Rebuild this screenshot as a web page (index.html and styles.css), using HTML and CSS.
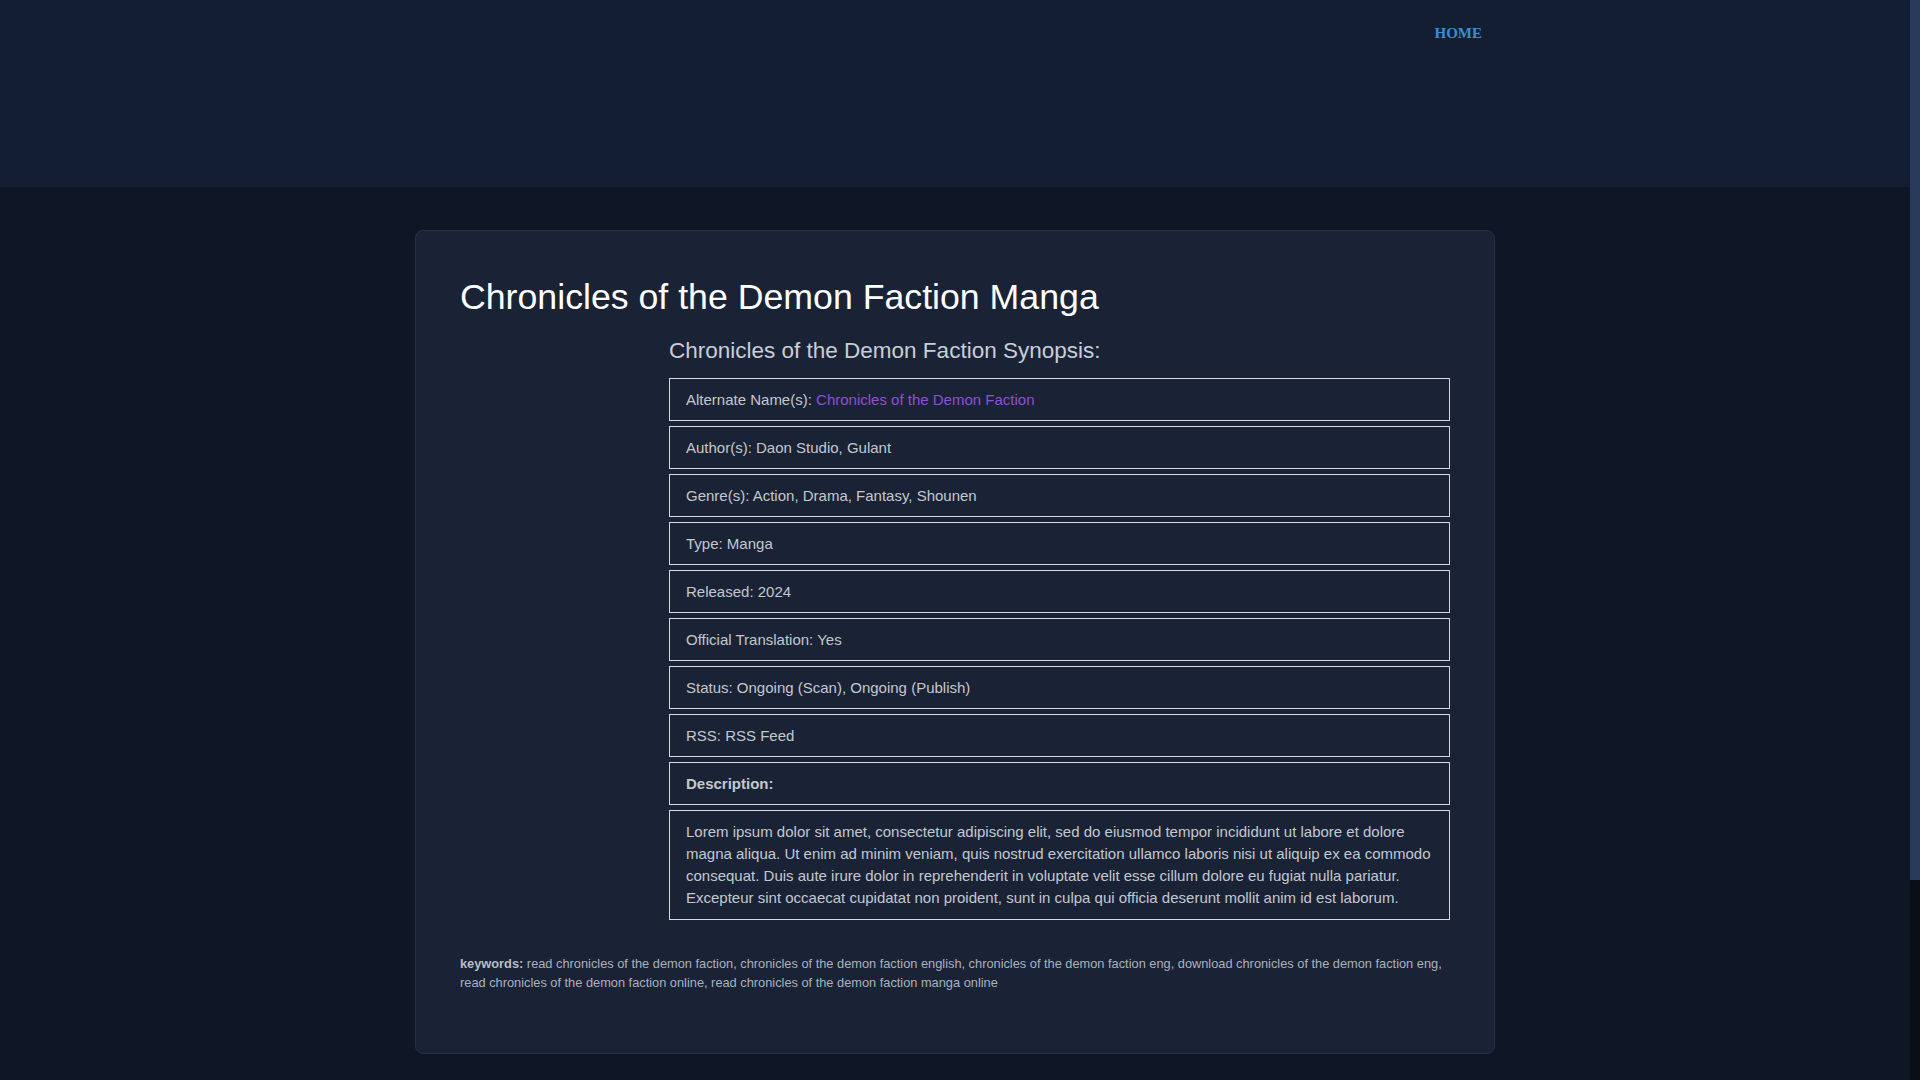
FILE: index.html
```html
<!DOCTYPE html>
<html lang="en">
<head>
<meta charset="utf-8">
<title>Chronicles of the Demon Faction Manga</title>
<link rel="stylesheet" href="styles.css">
</head>
<body>
<header class="site-header">
  <div class="header-inner">
    <nav class="nav">
      <a class="nav-link" href="#">HOME</a>
    </nav>
  </div>
</header>
<main class="main">
  <article class="card">
    <h1 class="title">Chronicles of the Demon Faction Manga</h1>
    <div class="info-grid">
      <div class="cover"></div>
      <div class="info">
        <h2 class="synopsis-title">Chronicles of the Demon Faction Synopsis:</h2>
        <ul class="info-list">
          <li class="info-item">Alternate Name(s): <a class="alt-link" href="#">Chronicles of the Demon Faction</a></li>
          <li class="info-item">Author(s): Daon Studio, Gulant</li>
          <li class="info-item">Genre(s): Action, Drama, Fantasy, Shounen</li>
          <li class="info-item">Type: Manga</li>
          <li class="info-item">Released: 2024</li>
          <li class="info-item">Official Translation: Yes</li>
          <li class="info-item">Status: Ongoing (Scan), Ongoing (Publish)</li>
          <li class="info-item">RSS: RSS Feed</li>
          <li class="info-item"><strong>Description:</strong></li>
          <li class="info-item desc">Lorem ipsum dolor sit amet, consectetur adipiscing elit, sed do eiusmod tempor incididunt ut labore et dolore magna aliqua. Ut enim ad minim veniam, quis nostrud exercitation ullamco laboris nisi ut aliquip ex ea commodo consequat. Duis aute irure dolor in reprehenderit in voluptate velit esse cillum dolore eu fugiat nulla pariatur. Excepteur sint occaecat cupidatat non proident, sunt in culpa qui officia deserunt mollit anim id est laborum.</li>
        </ul>
      </div>
    </div>
    <p class="keywords"><strong>keywords:</strong> read chronicles of the demon faction, chronicles of the demon faction english, chronicles of the demon faction eng, download chronicles of the demon faction eng, read chronicles of the demon faction online, read chronicles of the demon faction manga online</p>
  </article>
</main>
<footer class="footer"></footer>
<div class="scrollbar" aria-hidden="true"><div class="scrollbar-thumb"></div></div>
</body>
</html>
```
FILE: styles.css
```css
html {
  background: #0f1726;
}
body {
  margin: 0;
  padding-right: 10px;
  background: #0f1726;
  font-family: "Liberation Sans", Arial, sans-serif;
  color: #c3c8d0;
}
.scrollbar {
  position: fixed;
  top: 0;
  right: 0;
  width: 10px;
  height: 100vh;
  background: #0a0e16;
}
.scrollbar-thumb {
  height: 880px;
  background: #2a3a5a;
}
.site-header {
  height: 187px;
  background: #131e32;
}
.header-inner {
  max-width: 1080px;
  margin: 0 auto;
  display: flex;
  justify-content: flex-end;
  padding: 0 13px;
  box-sizing: border-box;
}
.nav {
  display: flex;
  padding-top: 24px;
}
.nav-link {
  font-family: "Liberation Serif", "Times New Roman", serif;
  font-weight: bold;
  font-size: 15px;
  color: #3a8fd0;
  text-decoration: none;
  line-height: 18px;
}
.main {
  padding-top: 43px;
}
.card {
  width: 1080px;
  box-sizing: border-box;
  margin: 0 auto;
  background: #1a2336;
  border: 1px solid #243049;
  border-radius: 8px;
  padding: 44px 44px 44px;
}
.title {
  margin: 0;
  font-size: 35.7px;
  font-weight: normal;
  line-height: 44px;
  color: #ffffff;
}
.info-grid {
  display: grid;
  grid-template-columns: 195px 1fr;
  column-gap: 14px;
  margin-top: 19px;
}
.synopsis-title {
  margin: 0 0 14px;
  font-size: 22.5px;
  font-weight: normal;
  line-height: 26px;
  color: #c9ced6;
}
.info-list {
  list-style: none;
  margin: 0;
  padding: 0;
}
.info-item {
  border: 1px solid #d6d9de;
  padding: 10px 16px;
  font-size: 15px;
  line-height: 21px;
  margin-bottom: 5px;
  color: #c3c8d0;
}
.info-item.desc {
  line-height: 22px;
  margin-bottom: 0;
}
.alt-link {
  color: #8e4fd0;
  text-decoration: none;
}
.keywords {
  margin: 34px 0 17px;
  font-size: 12.8px;
  line-height: 19px;
  color: #aab1bd;
}
.keywords strong {
  color: #b8bec8;
}
.footer {
  height: 272px;
}
```
